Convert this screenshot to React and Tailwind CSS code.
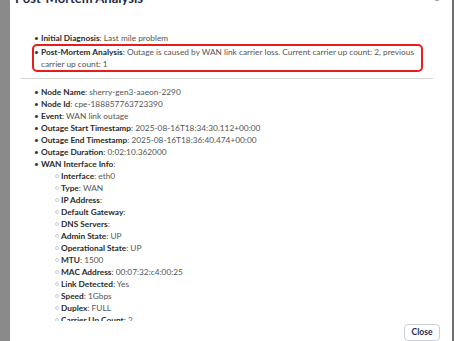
const summary = [
    { label: 'Node Name', value: 'sherry-gen3-aaeon-2290' },
    { label: 'Node Id', value: 'cpe-188857763723390' },
    { label: 'Event', value: 'WAN link outage' },
    { label: 'Outage Start Timestamp', value: '2025-08-16T18:34:30.112+00:00' },
    { label: 'Outage End Timestamp', value: '2025-08-16T18:36:40.474+00:00' },
    { label: 'Outage Duration', value: '0:02:10.362000' },
];

const wanInfo = [
    { label: 'Interface', value: 'eth0' },
    { label: 'Type', value: 'WAN' },
    { label: 'IP Address', value: '' },
    { label: 'Default Gateway', value: '' },
    { label: 'DNS Servers', value: '' },
    { label: 'Admin State', value: 'UP' },
    { label: 'Operational State', value: 'UP' },
    { label: 'MTU', value: '1500' },
    { label: 'MAC Address', value: '00:07:32:c4:00:25' },
    { label: 'Link Detected', value: 'Yes' },
    { label: 'Speed', value: '1Gbps' },
    { label: 'Duplex', value: 'FULL' },
    { label: 'Carrier Up Count', value: '2' },
];

function Item({ label, value, sub }) {
    return (
        <li className="flex leading-[12px]">
            <span className={sub ? 'w-[6px] shrink-0 text-[6px] text-[#999]' : 'w-[7px] shrink-0 text-[#333]'}>
                {sub ? '○' : '•'}
            </span>
            <span>
                <span className="font-bold text-[#2b2b2b]">{label}</span>
                <span className="text-[#555]">: {value}</span>
            </span>
        </li>
    );
}

export default function App() {
    return (
        <div className="flex w-[454px] h-[341px] overflow-hidden bg-[#6f6f6f]" style={{ fontFamily: 'Lato, "Noto Sans", sans-serif' }}>
            <div className="w-[10px] shrink-0 bg-[#8a8a8a]"></div>
            <div className="flex flex-col w-[442px] h-[341px] bg-white">
                <div className="relative flex items-center h-[16px] -mt-[10px] pl-[5px]">
                    <h2 className="text-[13px] leading-[16px] font-bold text-[#1f2a48]">Post-Mortem Analysis</h2>
                    <span className="absolute right-[10px] top-[1px] w-[10px] h-[10px] rounded-full border border-[#999]"></span>
                </div>
                <div className="flex-1 overflow-hidden pt-[26px] text-[8.3px]">
                    <ul className="pl-[24px]">
                        <Item label="Initial Diagnosis" value="Last mile problem" />
                    </ul>
                    <div className="ml-[22px] w-[391px] border-2 border-[#e81c1c] rounded-[5px]">
                        <ul>
                            <Item label="Post-Mortem Analysis" value="Outage is caused by WAN link carrier loss. Current carrier up count: 2, previous carrier up count: 1" />
                        </ul>
                    </div>
                    <div className="ml-[11px] w-[412px] h-px bg-[#d4d4d4] mt-[6px] mb-[7px]"></div>
                    <ul className="pl-[24px]">
                        {summary.map((row) => (
                            <Item key={row.label} label={row.label} value={row.value} />
                        ))}
                        <Item label="WAN Interface Info" value="" />
                    </ul>
                    <ul className="pl-[45px]">
                        {wanInfo.map((row) => (
                            <Item key={row.label} label={row.label} value={row.value} sub />
                        ))}
                    </ul>
                </div>
                <div className="flex justify-end h-[20px] pr-[12px] pt-[3px]">
                    <button className="w-[36px] h-[17px] rounded-[4px] border border-[#c9cde0] text-[8.5px] font-bold text-[#1f2a48]">
                        Close
                    </button>
                </div>
            </div>
        </div>
    );
}
